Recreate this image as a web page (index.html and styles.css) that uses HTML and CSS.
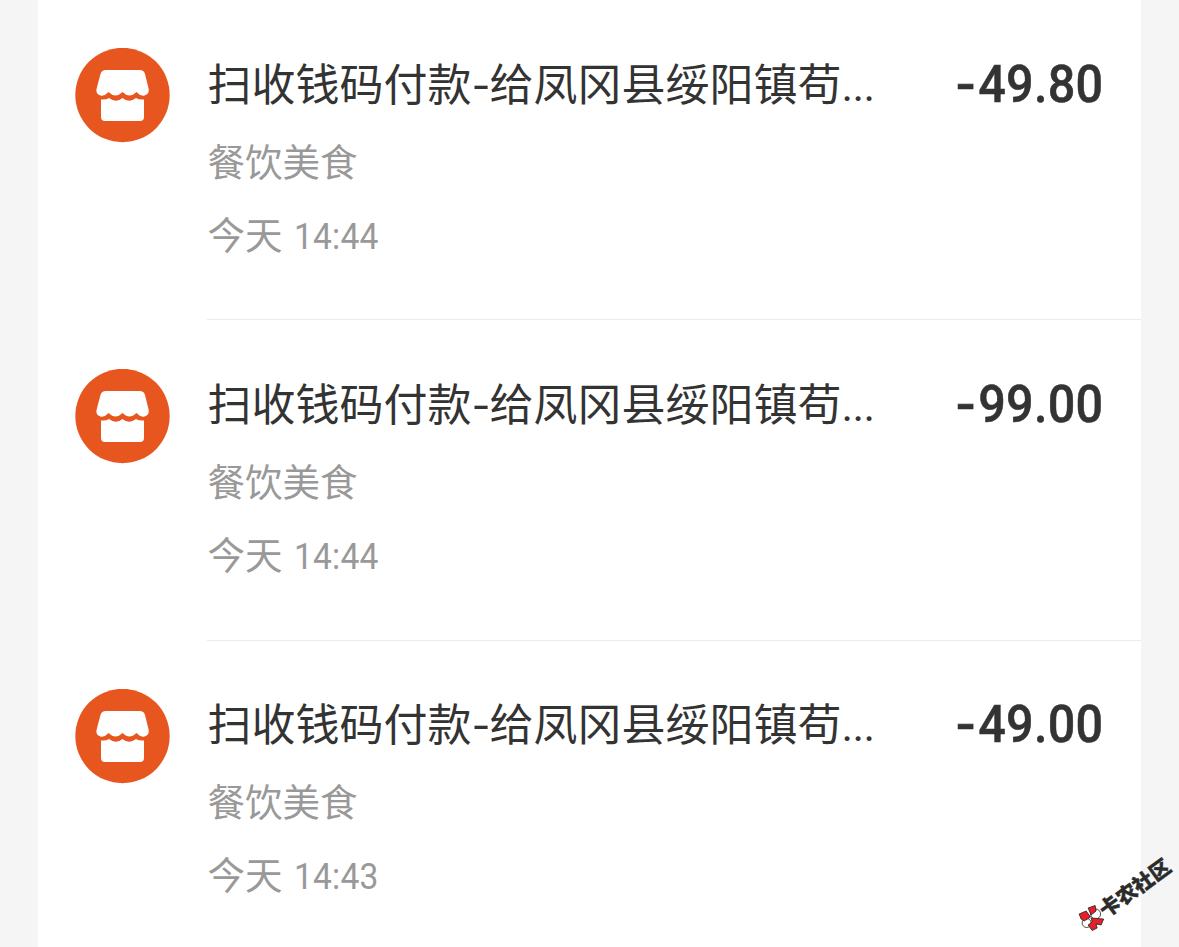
FILE: index.html
```html
<!DOCTYPE html>
<html lang="zh-CN">
<head>
<meta charset="utf-8">
<title>账单</title>
<link rel="stylesheet" href="styles.css">
</head>
<body>
<svg class="defs" width="0" height="0">
  <symbol id="shop" viewBox="0 0 95 95">
    <circle cx="47.5" cy="47" r="47.2" fill="#e8561f"/>
    <path fill="#fff" d="M31 22H64.500Q69 22 70 26L73.700 41Q74.500 46 69.500 47.500Q65.500 48.500 61.500 44Q54.500 51 47.500 44Q40.500 51 33.500 44Q29.500 48.500 25.500 47.500Q20.500 46 21.500 41L25.500 26Q26.500 22 31 22Z"/>
    <path fill="#fff" d="M26 51.500Q31 52 34 50Q41 55.500 47.500 50Q54 55.500 61 50Q64 52 69 51.500V69Q69 73 65 73H30Q26 73 26 69Z"/>
  </symbol>
</svg>
<main class="card">
  <article class="row">
    <svg class="icon"><use href="#shop"/></svg>
    <div class="body">
      <div class="head"><h2 class="title">扫收钱码付款<span class="dash">-</span>给凤冈县绥阳镇苟<span class="dots">...</span></h2><div class="amount"><span class="minus">-</span>49.80</div></div>
      <p class="category">餐饮美食</p>
      <p class="date">今天 <span class="time">14:44</span></p>
    </div>
  </article>
  <article class="row">
    <svg class="icon"><use href="#shop"/></svg>
    <div class="body">
      <div class="head"><h2 class="title">扫收钱码付款<span class="dash">-</span>给凤冈县绥阳镇苟<span class="dots">...</span></h2><div class="amount"><span class="minus">-</span>99.00</div></div>
      <p class="category">餐饮美食</p>
      <p class="date">今天 <span class="time">14:44</span></p>
    </div>
  </article>
  <article class="row">
    <svg class="icon"><use href="#shop"/></svg>
    <div class="body">
      <div class="head"><h2 class="title">扫收钱码付款<span class="dash">-</span>给凤冈县绥阳镇苟<span class="dots">...</span></h2><div class="amount"><span class="minus">-</span>49.00</div></div>
      <p class="category">餐饮美食</p>
      <p class="date">今天 <span class="time">14:43</span></p>
    </div>
  </article>
</main>
<div class="watermark">
  <svg class="mark" viewBox="0 0 26 26">
    <g stroke="#222" stroke-width=".8">
      <circle cx="17.500" cy="9" r="5" fill="#fff"/>
      <circle cx="8.500" cy="18" r="4.500" fill="#fff"/>
      <path fill="#e5202a" d="M1 9L8 6L12.500 12L6 16L3 14ZM10 3L17 .5L18 6L13 10ZM13 13L19 13.500L25.500 14L23 20L18 19L19 23L14 25.500L10 20L14 17Z"/>
    </g>
  </svg>
  <span class="brand">卡农社区</span>
</div>
</body>
</html>
```
FILE: styles.css
```css
* { box-sizing: border-box; }
body {
  margin: 0;
  height: 947px;
  overflow: hidden;
  position: relative;
  background: #f5f5f5;
  font-family: Roboto, "Noto Sans CJK SC", sans-serif;
  color: #333;
}
.defs { position: absolute; }
.card {
  width: 1103px;
  height: 947px;
  margin-left: 38px;
  overflow: hidden;
  background: #fff;
}
.row {
  display: flex;
  height: 320.4px;
  padding-left: 37px;
}
.icon {
  flex: none;
  width: 95px;
  height: 95px;
  margin: 48.2px 37px 0 0;
}
.body {
  flex: 1;
  padding: 55.6px 38px 0 0;
  border-bottom: 1px solid #ebebeb;
}
.row:last-child .body { border-bottom: 0; }
.head {
  display: flex;
  justify-content: space-between;
  height: 60px;
}
.title {
  margin: 0;
  padding-left: .5px;
  font-size: 44px;
  font-weight: 400;
  line-height: 60px;
  white-space: nowrap;
}
.dash, .dots, .minus { display: inline-block; }
.dash { width: 18px; text-align: center; transform: scaleX(1.25); }
.dots { width: 34px; letter-spacing: -.6px; }
.amount {
  margin-top: -2px;
  font-size: 52.5px;
  font-weight: 500;
  line-height: 60px;
  white-space: nowrap;
  letter-spacing: .3px;
  -webkit-text-stroke: .5px #333;
  transform: scaleX(.925);
  transform-origin: right;
}
.minus { width: 22px; transform: scaleX(1.2); }
.category, .date {
  margin: 0;
  padding-left: .5px;
  font-size: 37.5px;
  color: #999;
  white-space: nowrap;
}
.category { margin-top: 17px; line-height: 60px; }
.date { margin-top: 13px; line-height: 60px; }
.time {
  display: inline-block;
  margin-left: 2.5px;
  font-size: 36.5px;
  letter-spacing: .2px;
  transform: scaleX(.92);
  transform-origin: left;
}
.watermark {
  position: absolute;
  left: 1070px;
  top: 877px;
  display: flex;
  align-items: center;
  width: 108px;
  transform: rotate(-36deg);
}
.mark { flex: none; width: 26px; height: 26px; transform: rotate(36deg); }
.brand {
  margin: 5px 0 0 -1px;
  font-size: 20.5px;
  font-weight: 900;
  line-height: 28px;
  white-space: nowrap;
  color: #2b2b2b;
  -webkit-text-stroke: .4px #2b2b2b;
}
```
